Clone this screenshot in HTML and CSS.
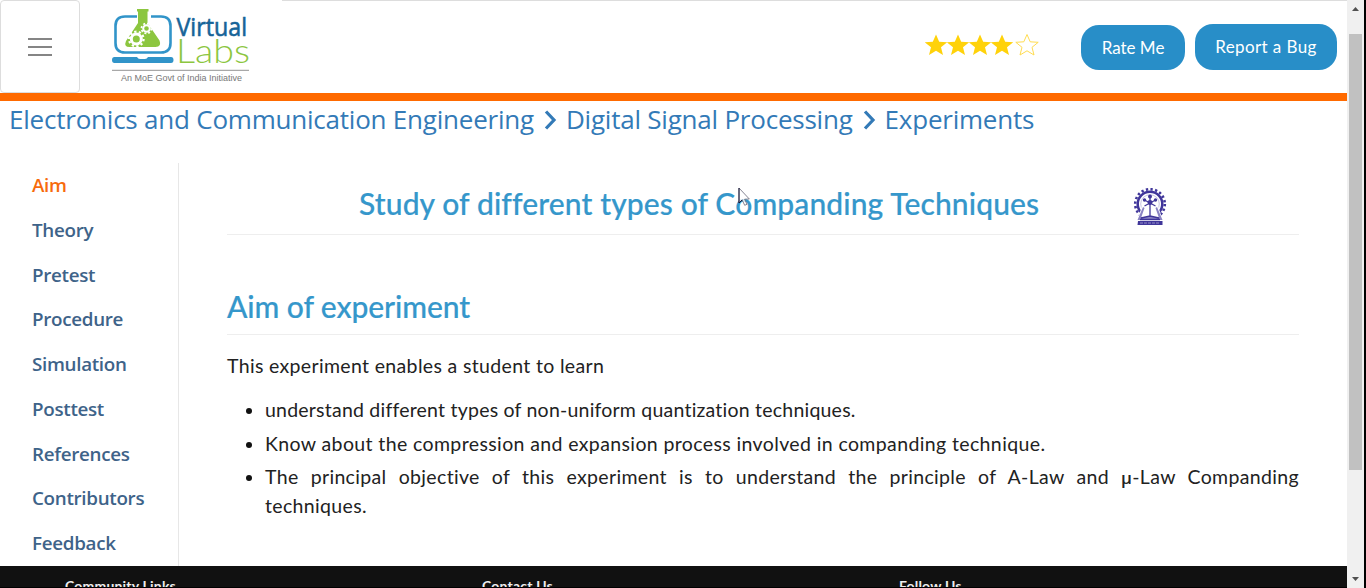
FILE: index.html
```html
<!DOCTYPE html>
<html lang="en">
<head>
<meta charset="utf-8">
<title>Virtual Labs</title>
<link rel="stylesheet" href="styles.css">
</head>
<body>
<div class="window">
  <div class="page">
    <header class="header">
      <button class="menu" aria-label="Menu"><span></span><span></span><span></span></button>
      <svg class="logo" width="202" height="93" viewBox="80 0 202 93">
        <path d="M137 16.500h-12q-9.500 0-9.500 9.500v17q0 9.500 9.500 9.500h36q9.500 0 9.500-9.500v-17q0-9.500-9.500-9.500h-10" fill="none" stroke="#3194c9" stroke-width="2.600"/>
        <path d="M137 9h11.500v2.500h-1V23l12 17.500q2.500 6.500-4 6.500h-26q-6 0-3.500-6L138 23V11.500h-1z" fill="#8cc63f"/>
        <g fill="none" stroke="#fff">
          <circle cx="136.300" cy="39" r="5" stroke-width="3"/>
          <circle cx="136.300" cy="39" r="7.300" stroke-width="2.200" stroke-dasharray="2.290 2.290"/>
          <circle cx="146.500" cy="28.500" r="3.300" stroke-width="2"/>
          <circle cx="146.500" cy="28.500" r="5" stroke-width="1.800" stroke-dasharray="1.960 1.960"/>
        </g>
        <path d="M114.500 57H137q1 2 3 2h5q2 0 3-2h23q2.500 0 2.500 3t-2.500 3h-56.500q-2.500 0-2.500-3t2.500-3z" fill="#3194c9"/>
        <text class="logo-virtual" x="176.500" y="35.500" textLength="70.500" lengthAdjust="spacingAndGlyphs">Virtual</text>
        <text class="logo-labs" x="176" y="62.500" textLength="74" lengthAdjust="spacingAndGlyphs">Labs</text>
        <path d="M112 70.300h137" stroke="#a8a8a8" stroke-width="1.300"/>
        <text class="logo-tag" x="121" y="81" textLength="121" lengthAdjust="spacingAndGlyphs">An MoE Govt of India Initiative</text>
      </svg>
      <div class="header-right">
        <svg class="stars" width="114" height="24" viewBox="0 0 114 24">
          <defs><path id="star" d="M11 .5l3.200 7.300 8 .5-6.200 5 2 7.700-7-4.200L4 21l2-7.700-6.200-5 8-.5z"/></defs>
          <g fill="#ffd20a"><use href="#star"/><use href="#star" x="22"/><use href="#star" x="44"/><use href="#star" x="66"/></g>
          <use href="#star" x="91" fill="#fff" stroke="#ffdc50"/>
        </svg>
        <button class="pill rate">Rate Me</button>
        <button class="pill bug">Report a Bug</button>
      </div>
    </header>
    <nav class="crumbs">
      <a class="crumb-dept">Electronics and Communication Engineering</a>
      <svg class="chev" width="14" height="20" viewBox="0 0 14 20"><path d="M2 1.500l8 8.500-8 8.500"/></svg>
      <a class="crumb-lab">Digital Signal Processing</a>
      <svg class="chev" width="14" height="20" viewBox="0 0 14 20"><path d="M2 1.500l8 8.500-8 8.500"/></svg>
      <a class="crumb-exp">Experiments</a>
    </nav>
    <div class="columns">
      <aside class="side">
        <a class="active">Aim</a><a>Theory</a><a>Pretest</a><a>Procedure</a><a>Simulation</a><a>Posttest</a><a>References</a><a>Contributors</a><a>Feedback</a>
      </aside>
      <main class="content">
        <div class="title-row">
          <h1>Study of different types of Companding Techniques</h1>
          <svg class="emblem" width="36" height="38" viewBox="0 0 36 38">
            <g fill="none" stroke="#40369a">
              <circle cx="18" cy="16" r="12.300" stroke-width="2.500"/>
              <circle cx="18" cy="16" r="14.800" stroke-width="2.600" stroke-dasharray="2.320 2.330"/>
              <circle cx="18" cy="16" r="9.300" stroke-width=".6" opacity=".5"/>
            </g>
            <path d="M10 18h16l5 15H5z" fill="#fff"/>
            <path d="M11 19L5.500 32h25L25 19l-1.500 1L27 30l-9-2-9 2 3.500-10z" fill="#8b84c4"/>
            <path d="M18 7v22M12.500 12l11 6M23.500 12l-11 6M9 30l9-2 9 2M8 31.500h20" fill="none" stroke="#40369a" stroke-width="1.300"/>
            <g fill="#40369a"><circle cx="18" cy="8.500" r="2"/><circle cx="12.500" cy="12" r="1.700"/><circle cx="23.500" cy="12" r="1.700"/><circle cx="18" cy="14.500" r="2.400"/><path d="M6 33h24.500v4H5.500z"/></g>
            <path d="M8 35h20" stroke="#aaa5d2" stroke-width=".8" stroke-dasharray="3 1"/>
          </svg>
        </div>
        <h2><span>Aim of experiment</span></h2>
        <p class="intro">This experiment enables a student to learn</p>
        <ul>
          <li class="item-a">understand different types of non-uniform quantization techniques.</li>
          <li class="item-b">Know about the compression and expansion process involved in companding technique.</li>
          <li class="item-c">The principal objective of this experiment is to understand the principle of A-Law and <span class="mu">μ</span>-Law Companding techniques.</li>
        </ul>
      </main>
    </div>
    <footer class="footer"><span>Community Links</span><span>Contact Us</span><span>Follow Us</span></footer>
  </div>
  <div class="scrollbar">
    <svg width="17" height="34" viewBox="0 0 17 34"><path d="M5 11h7L8.500 7z" fill="#505050"/></svg>
    <div class="thumb"></div>
    <svg class="down" width="17" height="17" viewBox="0 0 17 17"><path d="M5 6h7L8.500 10z" fill="#505050"/></svg>
  </div>
</div>
<svg class="cursor" width="13" height="21" viewBox="0 0 13 21"><path d="M1 1v15l3.200-3 2.500 5.300 2.300-1-2.400-5.100 4.700-.2z" fill="#fff" fill-opacity=".75" stroke="#667" stroke-width=".8"/><path d="M1 1v15l3.200-3" fill="none" stroke="#113"/></svg>
</body>
</html>
```

FILE: styles.css
```css
* { box-sizing: border-box; }
body { margin: 0; background: #fff; overflow: hidden; font-family: Lato, sans-serif; }
.window { display: flex; width: 1366px; height: 588px; background: #000; }
.page { display: flex; flex-direction: column; width: 1347px; height: 588px; overflow: hidden; background: #fff; }
.header { display: flex; flex: none; height: 101px; border-bottom: 8px solid #ff6a00; }
.menu { display: flex; flex-direction: column; align-items: center; justify-content: center; gap: 6px; width: 80px; height: 93px; padding: 0; border: 1px solid #ddd; border-radius: 4px; background: #fff; }
.menu span { width: 24px; height: 2px; background: #858585; }
.logo { flex: none; }
.logo-virtual { font: 400 25px "Open Sans", sans-serif; fill: #176498; stroke: #176498; stroke-width: .6px; }
.logo-labs { font: 300 33px Lato, sans-serif; fill: #8cc63f; }
.logo-tag { font: 9px "Liberation Sans", sans-serif; fill: #777; }
.header-right { display: flex; flex: 1; justify-content: flex-end; padding: 23px 10px 0 0; border-top: 1px solid #ddd; }
.stars { margin: 10px 42px 0 0; }
.pill { height: 46px; padding: 0; border: 0; border-radius: 18px; background: #288ec8; color: #fff; font-size: 17px; font-family: Lato, sans-serif; }
.rate { width: 104px; height: 45px; margin: 1px 10px 0 0; padding-bottom: 1px; }
.bug { width: 142px; padding-bottom: 2px; letter-spacing: .4px; }
.crumbs { display: flex; flex: none; height: 62px; padding: 0 0 0 9px; color: #337ab7; font: 26px/37px "Open Sans", sans-serif; letter-spacing: -.22px; white-space: nowrap; }
.chev { margin: 9px 8px 0 10px; fill: none; stroke: #337ab7; stroke-width: 3.2; }
.columns { display: flex; flex: none; height: 403px; }
.side { display: flex; flex-direction: column; width: 179px; height: 403px; padding-left: 32px; border-right: 1px solid #e7e7e7; color: #3e6389; font: 600 18.800px/44.750px "Open Sans", sans-serif; letter-spacing: -.3px; }
.side .active { color: #f76b0c; }
.content { width: 1168px; padding: 0 48px; color: #222; font-size: 19.500px; line-height: 29px; }
.title-row { display: flex; height: 72px; padding: 19px 0 0 132px; border-bottom: 1px solid #eee; }
h1, h2 { margin: 0; color: #3597cb; font-size: 30px; font-weight: 500; white-space: nowrap; -webkit-text-stroke: .2px #3597cb; }
h1 { width: 773px; line-height: 42px; letter-spacing: .12px; }
.emblem { margin-top: 6px; }
h2 { height: 100px; padding-top: 50px; line-height: 42px; letter-spacing: -.08px; border-bottom: 1px solid #eee; }
p { margin: 16px 0 0; }
.intro { letter-spacing: .34px; }
ul { margin: 15px 0 0; padding-left: 38px; }
li { margin-bottom: 4.500px; text-align: justify; }
li::marker { color: #111; }
.item-a { letter-spacing: .22px; }
.item-b { letter-spacing: .38px; }
.item-c { letter-spacing: .34px; }
.mu { font-family: "Open Sans", sans-serif; font-size: 17px; font-weight: 600; line-height: 1; }
.footer { display: flex; flex: none; height: 22px; padding: 11px 0 0 65px; border-bottom: 1px solid #000; background: #111; color: #eee; font: 700 14px/18px Lato, sans-serif; letter-spacing: .2px; overflow: hidden; }
.footer span { width: 417px; }
.scrollbar { display: flex; flex-direction: column; width: 17px; height: 588px; background: #f0f0f0; }
.thumb { width: 13px; height: 436px; margin-left: 2px; background: #c1c1c1; }
.down { margin-top: auto; }
.cursor { position: absolute; left: 738px; top: 187px; }
```
